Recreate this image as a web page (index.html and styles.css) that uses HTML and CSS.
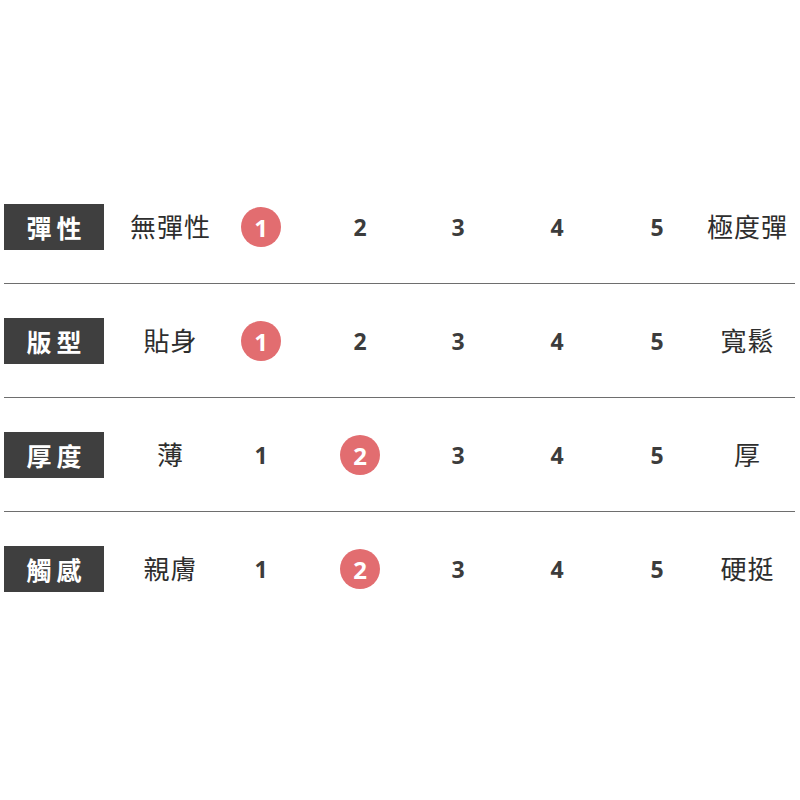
FILE: index.html
```html
<!DOCTYPE html>
<html lang="zh-Hant">
<head>
<meta charset="utf-8">
<link rel="stylesheet" href="styles.css">
</head>
<body>
<div class="chart">
  <div class="row">
    <div class="tag">彈性</div>
    <div class="word">無彈性</div>
    <div class="num"><span class="dot">1</span></div>
    <div class="num">2</div>
    <div class="num">3</div>
    <div class="num">4</div>
    <div class="num">5</div>
    <div class="word end">極度彈</div>
  </div>
  <div class="row">
    <div class="tag">版型</div>
    <div class="word">貼身</div>
    <div class="num"><span class="dot">1</span></div>
    <div class="num">2</div>
    <div class="num">3</div>
    <div class="num">4</div>
    <div class="num">5</div>
    <div class="word end">寬鬆</div>
  </div>
  <div class="row">
    <div class="tag">厚度</div>
    <div class="word">薄</div>
    <div class="num">1</div>
    <div class="num"><span class="dot">2</span></div>
    <div class="num">3</div>
    <div class="num">4</div>
    <div class="num">5</div>
    <div class="word end">厚</div>
  </div>
  <div class="row last">
    <div class="tag">觸感</div>
    <div class="word">親膚</div>
    <div class="num">1</div>
    <div class="num"><span class="dot">2</span></div>
    <div class="num">3</div>
    <div class="num">4</div>
    <div class="num">5</div>
    <div class="word end">硬挺</div>
  </div>
</div>
</body>
</html>
```
FILE: styles.css
```css
html, body {
  margin: 0;
  padding: 0;
  background: #ffffff;
}
.chart {
  padding: 170px 5px 0 4px;
}
.row {
  display: grid;
  grid-template-columns: 100px 132px 50px 148px 48px 150px 50px 1fr;
  align-items: center;
  height: 46px;
  padding: 34px 0 33px;
  border-bottom: 1px solid #6e6e6e;
}
.row.last {
  border-bottom: none;
}
.tag {
  height: 46px;
  background: #3f3f3f;
  color: #ffffff;
  font-family: "Noto Sans CJK TC", sans-serif;
  font-weight: 700;
  font-size: 25px;
  letter-spacing: 5px;
  text-indent: 5px;
  display: flex;
  align-items: center;
  justify-content: center;
}
.word {
  text-align: center;
  color: #2e2e2e;
  font-family: "Noto Sans CJK TC", sans-serif;
  font-weight: 400;
  font-size: 26px;
  letter-spacing: 1px;
  text-indent: 1px;
  margin-top: -3px;
}
.word.end {
  padding-left: 17px;
}
.num {
  display: flex;
  justify-content: center;
  align-items: center;
  color: #3c3c3c;
  font-family: "Noto Sans", "DejaVu Sans", sans-serif;
  font-weight: 700;
  font-size: 23px;
}
.dot {
  width: 40px;
  height: 40px;
  border-radius: 50%;
  background: #e26d70;
  color: #ffffff;
  font-size: 24px;
  display: flex;
  align-items: center;
  justify-content: center;
}
```
